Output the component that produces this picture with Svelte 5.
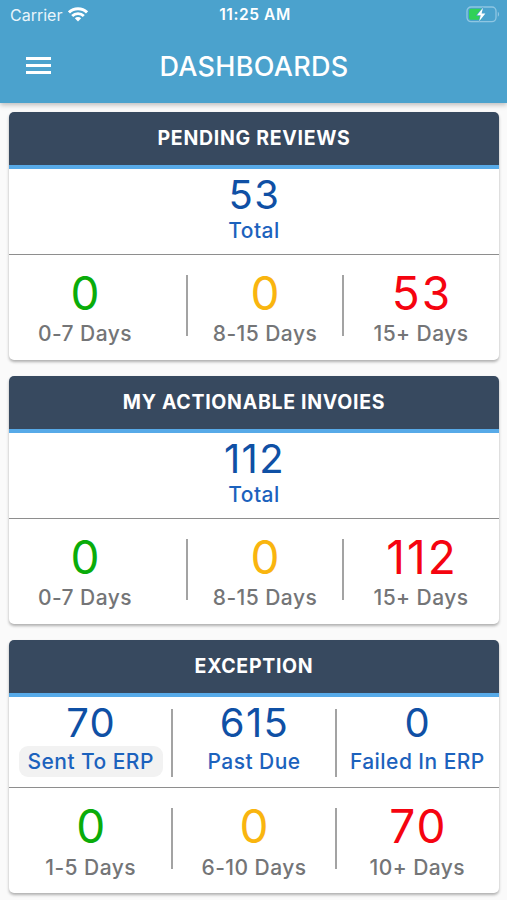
<script>
    const cards = [
        {
            title: "PENDING REVIEWS",
            totals: [{ value: 53, label: "Total" }],
            aging: [
                { value: 0, label: "0-7 Days", color: "green" },
                { value: 0, label: "8-15 Days", color: "amber" },
                { value: 53, label: "15+ Days", color: "red" },
            ],
        },
        {
            title: "MY ACTIONABLE INVOIES",
            totals: [{ value: 112, label: "Total" }],
            aging: [
                { value: 0, label: "0-7 Days", color: "green" },
                { value: 0, label: "8-15 Days", color: "amber" },
                { value: 112, label: "15+ Days", color: "red" },
            ],
        },
        {
            title: "EXCEPTION",
            totals: [
                { value: 70, label: "Sent To ERP", selected: true },
                { value: 615, label: "Past Due" },
                { value: 0, label: "Failed In ERP" },
            ],
            aging: [
                { value: 0, label: "1-5 Days", color: "green" },
                { value: 0, label: "6-10 Days", color: "amber" },
                { value: 70, label: "10+ Days", color: "red" },
            ],
        },
    ];
</script>

<header>
    <div class="status">
        <div class="carrier">
            <span>Carrier</span>
            <svg width="20" height="15" viewBox="0 0 20 15">
                <g fill="none" stroke="#fff" stroke-width="2.9">
                    <path d="M1 5.4a12.8 12.8 0 0 1 18 0" />
                    <path d="M4.2 9a8.2 8.2 0 0 1 11.6 0" />
                </g>
                <path d="M10 14.6l-3.2-3.3a4.6 4.6 0 0 1 6.4 0z" fill="#fff" />
            </svg>
        </div>
        <span class="time">11:25 AM</span>
        <svg class="battery" width="34" height="17" viewBox="0 0 34 17">
            <rect x="1" y="1" width="29" height="14.6" rx="4" fill="none" stroke="#8fc6e2" stroke-width="1.3" />
            <path d="M31.8 5.8c1.7.8 1.7 4.2 0 5z" fill="#8fc6e2" />
            <path d="M5 2.8h10.5v11H5a2 2 0 0 1-2-2v-7a2 2 0 0 1 2-2z" fill="#30d158" />
            <path
                d="M17 1.7l-6 7.5h3.7l-1.5 6 6.2-7.8h-3.8z"
                fill="#fff"
                stroke="#4ba2cd"
                stroke-width="1.2"
                paint-order="stroke"
            />
        </svg>
    </div>
    <div class="toolbar">
        <button class="menu" aria-label="Menu">
            <i></i>
            <i></i>
            <i></i>
        </button>
        <h1>DASHBOARDS</h1>
    </div>
</header>

<main>
    {#each cards as card}
        <section class="card" class:single={card.totals.length === 1}>
            <h2>{card.title}</h2>
            <div class="totals">
                {#each card.totals as item}
                    <div class="cell">
                        <strong>{item.value}</strong>
                        <span class:selected={item.selected}>{item.label}</span>
                    </div>
                {/each}
            </div>
            <div class="aging">
                {#each card.aging as item}
                    <div class="cell">
                        <strong class={item.color}>{item.value}</strong>
                        <span>{item.label}</span>
                    </div>
                {/each}
            </div>
        </section>
    {/each}
</main>

<style>
    :global(body) {
        background-color: #fafafa;
        font-family: Inter, "Liberation Sans", sans-serif;
    }

    header {
        position: relative;
        height: 103px;
        background-color: #4ba2cd;
        color: #fff;
        box-shadow: 0 2px 5px rgba(0, 0, 0, 0.25);
    }

    .status {
        display: grid;
        grid-template-columns: 1fr auto 1fr;
        align-items: center;
        height: 29px;
        padding: 0 7px 0 10px;
        font-size: 16px;
    }

    .carrier {
        display: flex;
        align-items: center;
        gap: 6px;
        color: #e9f5fb;
    }

    .time {
        font-size: 15.5px;
        font-weight: 600;
        line-height: 20px;
        letter-spacing: 0.6px;
        padding-top: 1px;
    }

    .battery {
        justify-self: end;
    }

    .toolbar {
        display: grid;
        grid-template-columns: 78px 1fr 78px;
        align-items: center;
        height: 73px;
    }

    .menu {
        display: flex;
        flex-direction: column;
        gap: 4px;
        width: 25px;
        margin: 0 0 0 26px;
        padding: 0;
        background: none;
        border: none;
    }

    .menu i {
        width: 100%;
        height: 3px;
        background-color: #fff;
    }

    h1 {
        margin: 0;
        padding: 2px 0 0 1px;
        font-size: 27px;
        font-weight: 500;
        line-height: 32px;
        text-align: center;
        letter-spacing: 0.3px;
    }

    main {
        display: flex;
        flex-direction: column;
        gap: 16px;
        padding: 9px 8px 7px 9px;
    }

    .card {
        background-color: #fff;
        border-radius: 5px;
        box-shadow: 0 2px 3px rgba(0, 0, 0, 0.3);
        overflow: hidden;
    }

    h2 {
        height: 53px;
        margin: 0;
        background-color: #37495f;
        border-bottom: 4px solid #57aae8;
        color: #fff;
        font-size: 19.5px;
        font-weight: 700;
        line-height: 53px;
        text-align: center;
        letter-spacing: 0.7px;
    }

    .totals,
    .aging {
        display: grid;
        grid-template-columns: repeat(3, 1fr);
        box-sizing: border-box;
    }

    .totals {
        height: 91px;
        padding-top: 4px;
        border-bottom: 1.5px solid #8e8e8e;
        color: #0f50a5;
    }

    .aging {
        height: 105px;
        padding-top: 13px;
    }

    .single .totals {
        grid-template-columns: 1fr;
        height: 86px;
    }

    .single .aging {
        grid-template-columns: 178px 1fr 1fr;
    }

    .single .aging .cell:first-child {
        padding-right: 26px;
    }

    .cell {
        position: relative;
        display: flex;
        flex-direction: column;
        align-items: center;
    }

    /* short divider between neighbouring cells */
    .cell + .cell::before {
        content: "";
        position: absolute;
        left: -1px;
        top: 7px;
        width: 2px;
        height: 61px;
        background-color: #a3a3a3;
    }

    .totals .cell + .cell::before {
        top: 8px;
        height: 68px;
    }

    strong {
        font-size: 46px;
        font-weight: 400;
        line-height: 50px;
        letter-spacing: 2px;
        margin-right: -2px;
    }

    .totals strong {
        font-size: 40px;
        line-height: 43px;
        letter-spacing: 1.4px;
        margin-right: -1px;
    }

    .cell span {
        color: #747577;
        font-size: 21px;
        font-weight: 500;
        line-height: 33px;
        letter-spacing: 0.45px;
    }

    .single .aging .cell span {
        line-height: 31px;
    }

    .totals .cell span {
        margin-top: 2px;
        padding: 0 9px;
        border-radius: 9px;
        color: #1c62bd;
        line-height: 31px;
    }

    .single .totals .cell span {
        margin-top: -1px;
    }

    .totals .cell .selected {
        background-color: #f2f2f2;
    }

    .green {
        color: #0aac0a;
    }

    .amber {
        color: #f9b50f;
    }

    .red {
        color: #f50410;
    }
</style>
